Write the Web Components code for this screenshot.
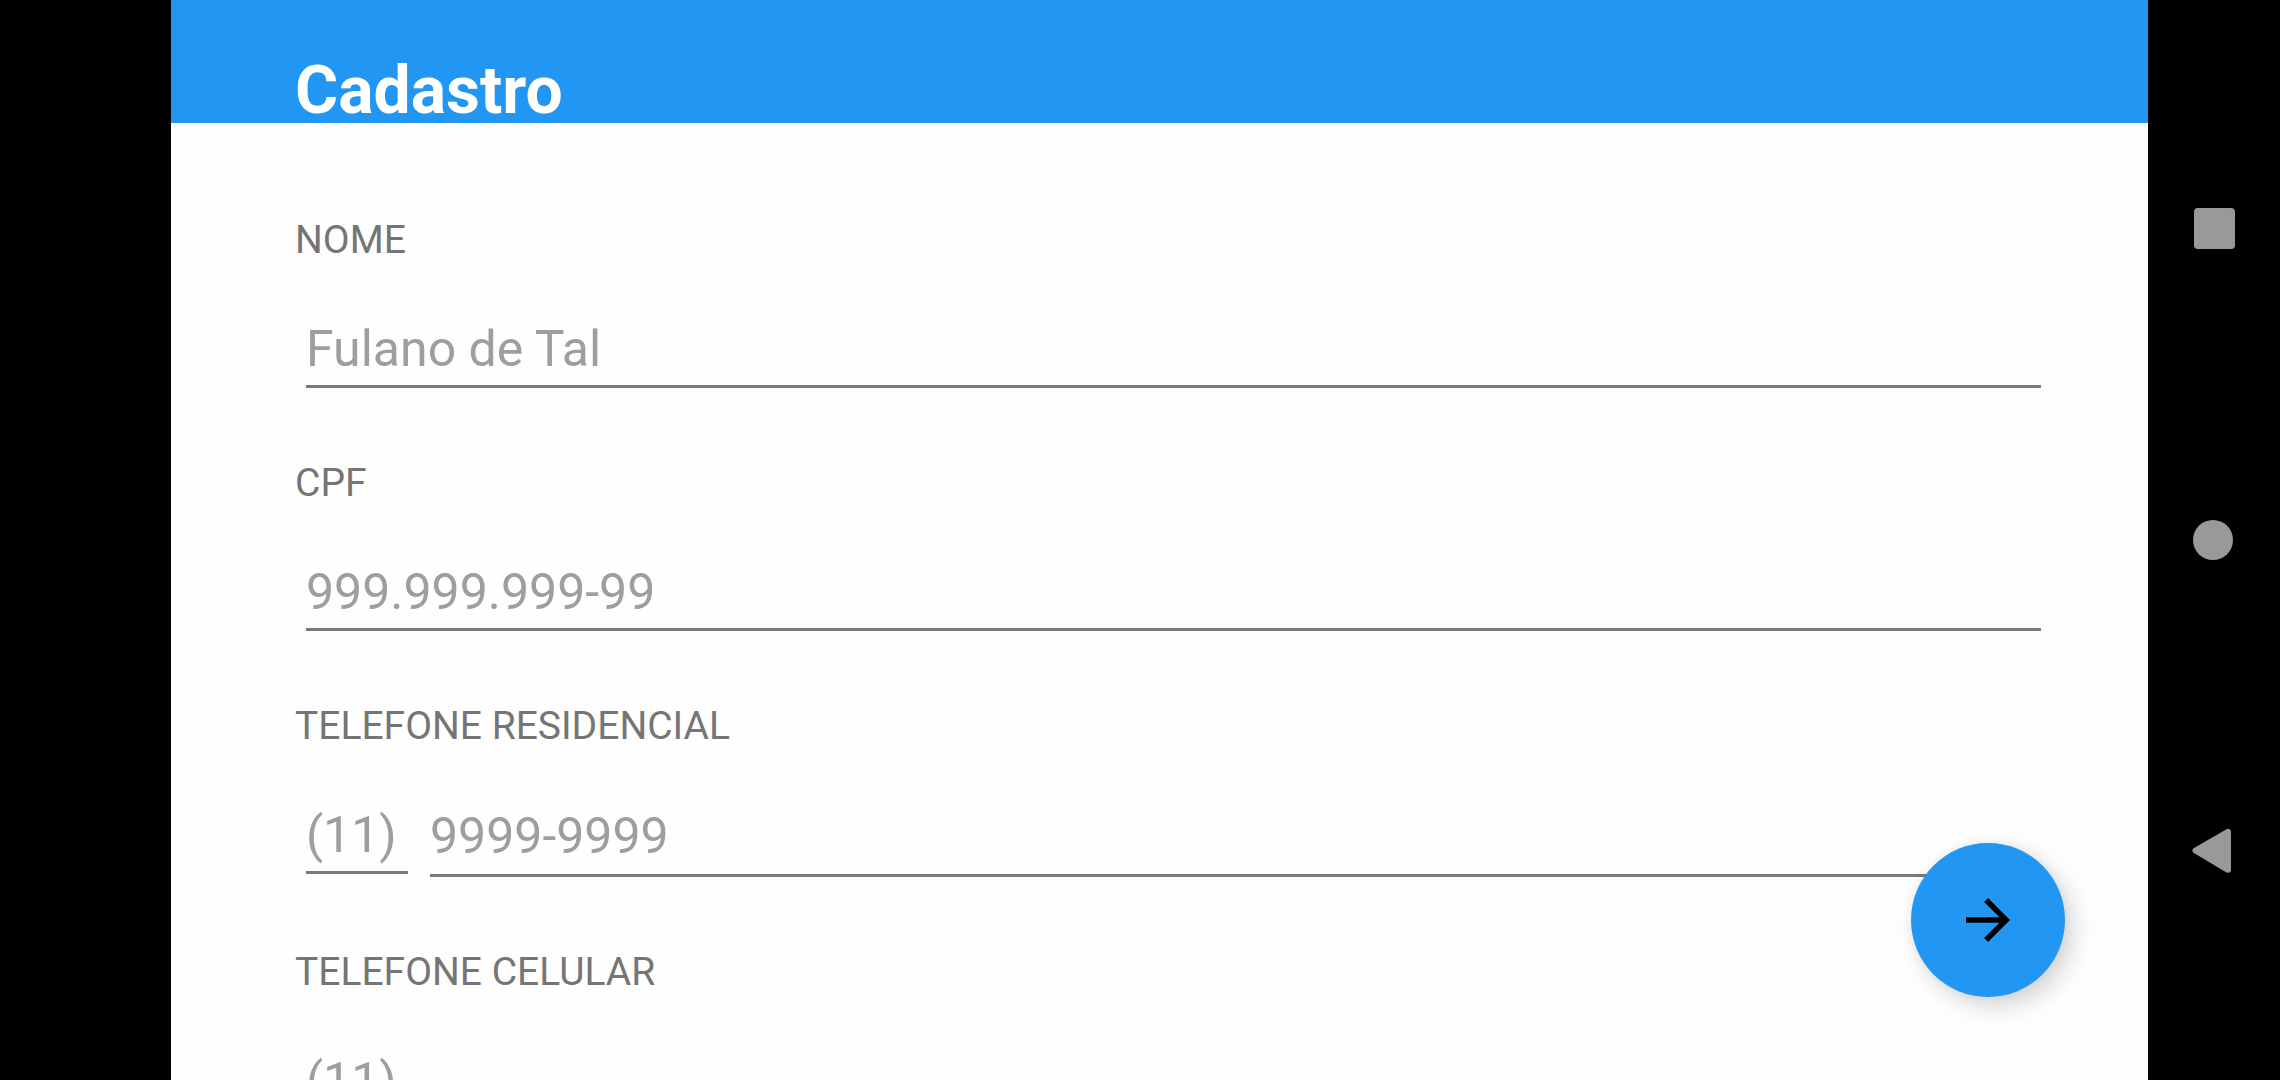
<!DOCTYPE html>
<html lang="pt-BR">
<head>
<meta charset="utf-8">
<title>Cadastro</title>
<style>
  html, body { height: 100%; margin: 0; background: #000; overflow: hidden; }
  body { font-family: Roboto, "Liberation Sans", sans-serif; }
</style>
</head>
<body>
<device-screen>
  <app-bar>Cadastro</app-bar>
  <signup-form>
    <form-field label="NOME" placeholder="Fulano de Tal"></form-field>
    <form-field label="CPF" placeholder="999.999.999-99"></form-field>
    <phone-field label="TELEFONE RESIDENCIAL" area="(11)" placeholder="9999-9999"></phone-field>
    <phone-field label="TELEFONE CELULAR" area="(11)"></phone-field>
  </signup-form>
  <next-button slot="fab"></next-button>
  <system-nav slot="nav"></system-nav>
</device-screen>

<script>
const fieldStyles = `
  :host { display: flex; flex-direction: column; gap: 56px; }
  label { font-size: 39px; line-height: 46px; color: #757575; }
  input {
    box-sizing: border-box; width: 100%; min-width: 0; height: 69px; margin: 0;
    padding: 0 0 6px; border: 0; border-bottom: 3px solid #7a7a7a; border-radius: 0;
    background: none; outline: 0; color: #212121;
    font-family: inherit; font-size: 50px; line-height: 60px;
  }
  input::placeholder { color: #9e9e9e; opacity: 1; }
`;

function define(name, render) {
  customElements.define(name, class extends HTMLElement {
    constructor() {
      super();
      this.attachShadow({ mode: 'open' });
    }
    connectedCallback() {
      this.shadowRoot.innerHTML = render(this);
    }
  });
}

define('device-screen', () => `
  <style>
    :host { display: flex; height: 100vh; padding-left: 171px; box-sizing: border-box; background: #000; }
    main { position: relative; flex: 1; min-width: 0; overflow: hidden; background: #fefefe; }
    slot[name=fab] { display: block; position: absolute; right: 83px; bottom: 83px; }
  </style>
  <main><slot></slot><slot name="fab"></slot></main>
  <slot name="nav"></slot>`);

define('app-bar', () => `
  <style>
    :host { display: block; background: #2196f3; }
    h1 { box-sizing: border-box; height: 123px; margin: 0; padding: 59px 124px 0; color: #fff; font-size: 66px; line-height: 64px; font-weight: 700; }
  </style>
  <h1><slot></slot></h1>`);

define('signup-form', () => `
  <style>
    :host { display: block; }
    form { display: flex; flex-direction: column; gap: 72px; padding: 94px 107px 72px 124px; }
  </style>
  <form><slot></slot></form>`);

define('form-field', el => `
  <style>
    ${fieldStyles}
    .row { display: flex; padding-left: 11px; }
  </style>
  <label for="value">${el.getAttribute('label')}</label>
  <div class="row"><input id="value" type="text" placeholder="${el.getAttribute('placeholder')}"></div>`);

define('phone-field', el => `
  <style>
    ${fieldStyles}
    .row { display: flex; align-items: flex-start; gap: 22px; padding-left: 11px; }
    .area { flex: none; width: 102px; }
    .number { flex: 1; height: 72px; padding-bottom: 8px; }
  </style>
  <label for="number">${el.getAttribute('label')}</label>
  <div class="row">
    <input class="area" type="tel" aria-label="DDD" placeholder="${el.getAttribute('area')}">
    <input class="number" id="number" type="tel" placeholder="${el.getAttribute('placeholder') || ''}">
  </div>`);

define('next-button', () => `
  <style>
    :host { display: block; }
    button {
      display: flex; align-items: center; justify-content: center;
      width: 154px; height: 154px; padding: 0; border: 0; border-radius: 50%;
      background: #2196f3; box-shadow: 8px 9px 24px rgba(0, 0, 0, .17), 0 0 10px rgba(0, 0, 0, .05);
    }
    svg { display: block; width: 66px; height: 66px; }
  </style>
  <button type="button" aria-label="Avançar">
    <svg viewBox="0 0 24 24"><path d="M12 4l-1.41 1.41L16.17 11H4v2h12.17l-5.58 5.59L12 20l8-8z"/></svg>
  </button>`);

define('system-nav', () => `
  <style>
    :host { display: flex; flex: none; width: 132px; }
    nav { display: flex; flex: 1; flex-direction: column; justify-content: center; }
    button { display: flex; align-items: center; justify-content: center; height: 311px; padding: 0; border: 0; background: none; }
    svg { display: block; width: 44px; height: 46px; fill: #999; }
    .back { stroke: #999; stroke-width: 6; stroke-linejoin: round; }
  </style>
  <nav>
    <button type="button" aria-label="Recentes"><svg viewBox="0 0 44 46"><rect x="2" y="2" width="41" height="41" rx="4"/></svg></button>
    <button type="button" aria-label="Início"><svg viewBox="0 0 44 46"><circle cx="21" cy="23" r="20"/></svg></button>
    <button type="button" aria-label="Voltar"><svg viewBox="0 0 44 46"><path class="back" d="M3.500 22.500L36 3.800V41.800Z"/></svg></button>
  </nav>`);
</script>
</body>
</html>
